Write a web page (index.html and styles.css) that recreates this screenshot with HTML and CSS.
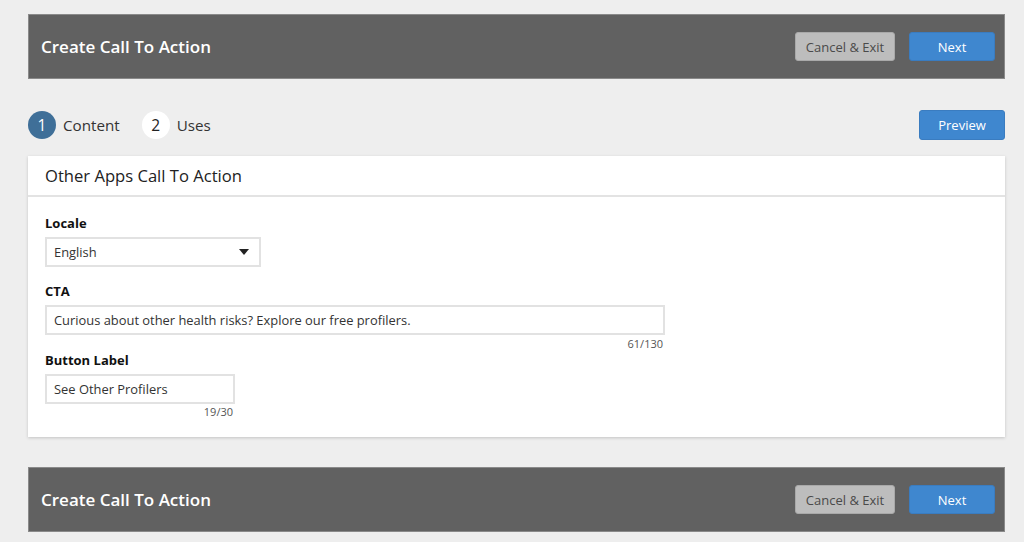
FILE: index.html
```html
<!DOCTYPE html>
<html>
<head>
<meta charset="utf-8">
<link rel="stylesheet" href="styles.css">
</head>
<body>
<div class="page">
  <div class="bar">
    <div class="bar-title">Create Call To Action</div>
    <div class="bar-actions">
      <button class="btn btn-grey">Cancel &amp; Exit</button>
      <button class="btn btn-blue btn-next">Next</button>
    </div>
  </div>

  <div class="steps">
    <div class="step-list">
      <div class="step"><span class="circle active">1</span><span class="step-label">Content</span></div>
      <div class="step"><span class="circle">2</span><span class="step-label">Uses</span></div>
    </div>
    <button class="btn btn-blue btn-preview">Preview</button>
  </div>

  <div class="card">
    <div class="card-head">Other Apps Call To Action</div>
    <div class="card-body">
      <div class="field">
        <div class="label">Locale</div>
        <div class="select">
          <span>English</span>
          <svg class="caret" width="10" height="6" viewBox="0 0 10 6"><path d="M0 0 L10 0 L5 6 Z" fill="#222"/></svg>
        </div>
      </div>
      <div class="field">
        <div class="label">CTA</div>
        <div class="input input-wide">Curious about other health risks? Explore our free profilers.</div>
        <div class="counter counter-wide">61/130</div>
      </div>
      <div class="field">
        <div class="label">Button Label</div>
        <div class="input input-short">See Other Profilers</div>
        <div class="counter counter-short">19/30</div>
      </div>
    </div>
  </div>

  <div class="bar bar-bottom">
    <div class="bar-title">Create Call To Action</div>
    <div class="bar-actions">
      <button class="btn btn-grey">Cancel &amp; Exit</button>
      <button class="btn btn-blue btn-next">Next</button>
    </div>
  </div>
</div>
</body>
</html>
```

FILE: styles.css
```css
* { box-sizing: border-box; }
html, body { margin: 0; padding: 0; }
body {
  background: #eeeeee;
  font-family: "Open Sans", "Liberation Sans", sans-serif;
  color: #222;
  overflow: hidden;
}
.page {
  width: 977px;
  margin-left: 28px;
  padding-top: 14px;
}
.bar {
  height: 65px;
  background: #616161;
  border: 1px solid #8a8a8a;
  display: flex;
  align-items: center;
  justify-content: space-between;
  padding: 0 9px 0 12px;
}
.bar-title {
  color: #fff;
  font-size: 17px;
  font-weight: 600;
}
.bar-actions {
  display: flex;
  gap: 14px;
}
.btn {
  font-family: inherit;
  font-size: 13px;
  border-radius: 3px;
  border: 1px solid transparent;
  height: 29px;
  padding: 0;
  cursor: pointer;
}
.btn-grey {
  width: 100px;
  background: #bdbdbd;
  color: #4a4a4a;
  border-color: #a9a9a9;
}
.btn-blue {
  background: #3f87cf;
  color: #fff;
  border-color: #3a7cc0;
}
.btn-next { width: 86px; }
.btn-preview { width: 86px; height: 30px; }

.steps {
  margin-top: 31px;
  height: 30px;
  display: flex;
  align-items: center;
  justify-content: space-between;
}
.step-list { display: flex; gap: 22px; }
.step { display: flex; align-items: center; gap: 7px; }
.circle {
  width: 28px;
  height: 28px;
  border-radius: 50%;
  background: #fff;
  color: #222;
  display: flex;
  align-items: center;
  justify-content: center;
  font-size: 15.5px;
}
.circle.active {
  background: #3f6f98;
  color: #fff;
}
.step-label {
  font-size: 15.2px;
  color: #333;
}

.card {
  margin-top: 16px;
  background: #fff;
  box-shadow: 0 1px 3px rgba(0,0,0,0.18);
}
.card-head {
  height: 41px;
  border-bottom: 2px solid #e3e3e3;
  padding-left: 17px;
  display: flex;
  align-items: center;
  font-size: 16.6px;
  color: #222;
}
.card-body {
  padding: 17px 17px 18px;
}
.field + .field { margin-top: 15px; }
.field:last-child .counter { margin-top: 1px; }
.label {
  font-size: 13px;
  font-weight: 700;
  line-height: 18px;
  margin-bottom: 5px;
  color: #111;
}
.select, .input {
  height: 30px;
  border: 2px solid #e2e2e2;
  display: flex;
  align-items: center;
  padding-left: 7px;
  font-size: 12.9px;
  color: #333;
}
.select {
  width: 216px;
  justify-content: space-between;
  padding-right: 10px;
}
.input-wide { width: 620px; }
.input-short { width: 190px; }
.counter {
  font-size: 11px;
  color: #555;
  line-height: 14px;
  margin-top: 2px;
  text-align: right;
}
.counter-wide { width: 618px; }
.counter-short { width: 188px; }
.field + .field + .field { margin-top: 0; }
.bar-bottom { margin-top: 30px; }
```
